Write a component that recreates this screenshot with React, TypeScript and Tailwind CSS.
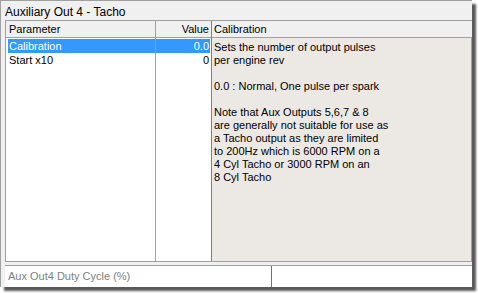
export default function App() {
  const rows = [
    { name: 'Calibration', value: '0.0', selected: true },
    { name: 'Start x10', value: '0', selected: false },
  ];

  const help = [
    'Sets the number of output pulses',
    'per engine rev',
    '',
    '0.0 : Normal, One pulse per spark',
    '',
    'Note that Aux Outputs 5,6,7 & 8',
    'are generally not suitable for use as',
    'a Tacho output as they are limited',
    'to 200Hz which is 6000 RPM on a',
    '4 Cyl Tacho or 3000 RPM on an',
    '8 Cyl Tacho',
  ];

  return (
    <div className="w-[478px] h-[293px] bg-white text-[11px] leading-[13px] text-black" style={{ fontFamily: '"Liberation Sans", Arial, sans-serif' }}>
      <div className="w-[472px] h-[287px] flex flex-col bg-[#f0f0f0] border-l border-t border-[#a0a0a0] shadow-[4px_4px_2px_rgba(0,0,0,0.65)]">
        {/* Title */}
        <div className="h-[19px] pl-[4px] pt-[5px] leading-[12px] text-[12px]">Auxiliary Out 4 - Tacho</div>

        {/* Table + help panel */}
        <div className="ml-[4px] h-[241px] flex border-t border-l border-[#a0a0a0]">
          <div className="w-[205px] flex flex-col bg-white">
            <div className="h-[17px] flex bg-[#f0f0f0] border-b border-[#a0a0a0]">
              <div className="w-[150px] pl-[3px] pt-[2px] border-r border-[#a0a0a0]">Parameter</div>
              <div className="flex-1 pr-[2px] pt-[2px] text-right">Value</div>
            </div>
            <div className="flex-1 flex">
              <div className="w-[150px] flex flex-col pt-[1px] pl-[2px] border-r border-[#a0a0a0]">
                {rows.map((r) => (
                  <div key={r.name} className={`h-[14px] pl-[1px] pt-[1px] ${r.selected ? 'bg-[#3399ff] text-white' : ''}`}>{r.name}</div>
                ))}
              </div>
              <div className="flex-1 flex flex-col pt-[1px] pr-[1px]">
                {rows.map((r) => (
                  <div key={r.name} className={`h-[14px] pr-[1px] pt-[1px] text-right ${r.selected ? 'bg-[#3399ff] text-white' : ''}`}>{r.value}</div>
                ))}
              </div>
            </div>
          </div>
          <div className="flex-1 flex flex-col border-l border-[#808080]">
            <div className="h-[17px] pl-[2px] pt-[2px] border-b border-[#a0a0a0]">Calibration</div>
            <div className="flex-1 bg-[#ece9e4] pl-[2px] pt-[3px] border-r border-[#a0a0a0]">
              {help.map((l, i) => (
                <div key={i} className="h-[13px] whitespace-pre">{l || ' '}</div>
              ))}
            </div>
          </div>
        </div>

        {/* Status bar */}
        <div className="h-[4px] ml-[4px] border-t border-[#a0a0a0]" />
        <div className="flex-1 ml-[4px] flex bg-white border-t border-[#a0a0a0]">
          <div className="w-[267px] pl-[3px] pt-[4px] text-[#808080] border-r border-[#707070]">Aux Out4 Duty Cycle (%)</div>
          <div className="flex-1" />
        </div>
      </div>
    </div>
  );
}
